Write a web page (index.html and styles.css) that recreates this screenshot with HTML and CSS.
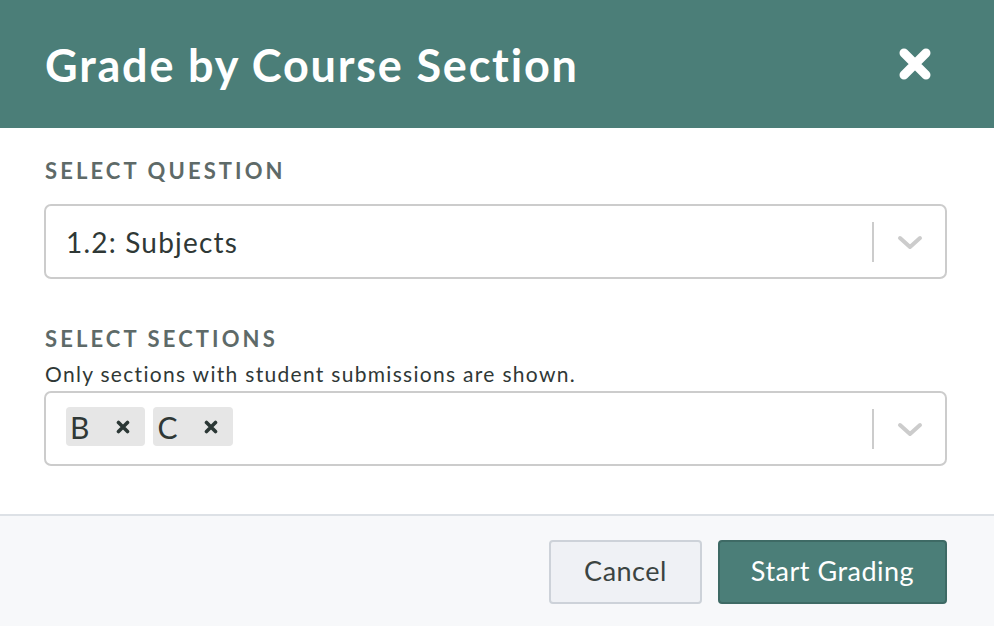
FILE: index.html
```html
<!DOCTYPE html>
<html lang="en">
<head>
<meta charset="utf-8">
<title>Grade by Course Section</title>
<link rel="stylesheet" href="styles.css">
</head>
<body>
<div class="modal">
  <header class="modal-header">
    <h1 class="modal-title">Grade by Course Section</h1>
    <button class="close-btn" aria-label="Close">
      <svg width="34" height="34" viewBox="0 0 34 34"><path d="M6 6 L28 28 M28 6 L6 28" stroke="#fff" stroke-width="9" stroke-linecap="round"/></svg>
    </button>
  </header>
  <section class="modal-body">
    <div class="field-label">Select Question</div>
    <div class="select select-first">
      <div class="select-value"><span class="single-value">1.2: Subjects</span></div>
      <div class="select-indicators">
        <span class="separator"></span>
        <span class="chevron"><svg width="26" height="16" viewBox="0 0 26 16"><path d="M3 3 L13 12 L23 3" fill="none" stroke="#cccccc" stroke-width="4" stroke-linecap="round" stroke-linejoin="round"/></svg></span>
      </div>
    </div>
    <div class="field-label field-label-second">Select Sections</div>
    <div class="help-text">Only sections with student submissions are shown.</div>
    <div class="select select-second">
      <div class="select-value tags">
        <span class="tag"><span class="tag-label">B</span><span class="tag-remove"><svg width="14" height="14" viewBox="0 0 14 14"><path d="M2.5 2.5 L11.5 11.5 M11.5 2.5 L2.5 11.5" stroke="#2b3735" stroke-width="3.6" stroke-linecap="round"/></svg></span></span>
        <span class="tag"><span class="tag-label">C</span><span class="tag-remove"><svg width="14" height="14" viewBox="0 0 14 14"><path d="M2.5 2.5 L11.5 11.5 M11.5 2.5 L2.5 11.5" stroke="#2b3735" stroke-width="3.6" stroke-linecap="round"/></svg></span></span>
      </div>
      <div class="select-indicators">
        <span class="separator"></span>
        <span class="chevron"><svg width="26" height="16" viewBox="0 0 26 16"><path d="M3 3 L13 12 L23 3" fill="none" stroke="#cccccc" stroke-width="4" stroke-linecap="round" stroke-linejoin="round"/></svg></span>
      </div>
    </div>
  </section>
  <footer class="modal-footer">
    <button class="btn btn-secondary">Cancel</button>
    <button class="btn btn-primary">Start Grading</button>
  </footer>
</div>
</body>
</html>
```
FILE: styles.css
```css
* { box-sizing: border-box; }
html, body { margin: 0; padding: 0; }
body {
  width: 994px;
  height: 626px;
  overflow: hidden;
  background: #ffffff;
  font-family: "Lato", "Liberation Sans", sans-serif;
  color: #2f3836;
}
.modal { display: flex; flex-direction: column; height: 626px; }
.modal-header {
  height: 128px;
  background: #4b7e78;
  display: flex;
  align-items: center;
  justify-content: space-between;
  padding: 0 62px 0 45px;
}
.modal-title {
  margin: 0;
  color: #ffffff;
  font-size: 45px;
  font-weight: 700;
  line-height: 1;
  letter-spacing: 1.8px;
  padding-top: 2px;
}
.close-btn {
  background: none;
  border: 0;
  padding: 0;
  width: 34px;
  height: 34px;
  display: flex;
  cursor: pointer;
}
.modal-body {
  padding: 31px 47px 48px 44px;
  display: flex;
  flex-direction: column;
}
.field-label {
  font-size: 22px;
  line-height: 24px;
  font-weight: 700;
  text-transform: uppercase;
  letter-spacing: 3.1px;
  color: #5e6a68;
  padding-left: 1px;
}
.field-label-second { margin-top: 48px; }
.help-text {
  margin-top: 11px;
  font-size: 21px;
  line-height: 24px;
  letter-spacing: 1.3px;
  color: #2f3836;
  padding-left: 1px;
}
.select {
  height: 75px;
  border: 2px solid #cccccc;
  border-radius: 7px;
  display: flex;
  align-items: center;
}
.select-first { margin-top: 21px; }
.select-second { margin-top: 5px; }
.select-value {
  flex: 1;
  padding-left: 20px;
  display: flex;
  align-items: center;
}
.single-value { font-size: 28px; letter-spacing: 1.2px; color: #2f3836; }
.tags { gap: 8px; margin-top: -4px; }
.tag {
  display: flex;
  align-items: center;
  height: 39px;
  background: #e6e6e6;
  border-radius: 4px;
}
.tag-label {
  font-size: 30px;
  color: #2f3836;
  padding: 0 0 0 4px;
}
.tag-remove {
  display: flex;
  align-items: center;
  padding: 0 15px 0 27px;
}
.select-indicators {
  display: flex;
  align-items: center;
  height: 100%;
}
.separator {
  width: 2px;
  height: 40px;
  background: #cccccc;
}
.chevron {
  width: 71px;
  display: flex;
  justify-content: center;
  align-items: center;
  padding-top: 2px;
}
.modal-footer {
  flex: 1;
  border-top: 2px solid #dde1e6;
  background: #f7f8fa;
  display: flex;
  justify-content: flex-end;
  align-items: flex-start;
  gap: 16px;
  padding: 24px 47px 0 0;
}
.btn {
  height: 64px;
  border-radius: 4px;
  font-family: "Lato", "Liberation Sans", sans-serif;
  font-size: 27px;
  letter-spacing: 0.5px;
  padding: 0 0 3px;
  cursor: pointer;
}
.btn-secondary {
  width: 153px;
  background: #eff1f5;
  border: 2px solid #cdd2d9;
  color: #3b4442;
}
.btn-primary {
  width: 229px;
  background: #4b7e78;
  border: 2px solid #3e6a65;
  color: #ffffff;
}
```
